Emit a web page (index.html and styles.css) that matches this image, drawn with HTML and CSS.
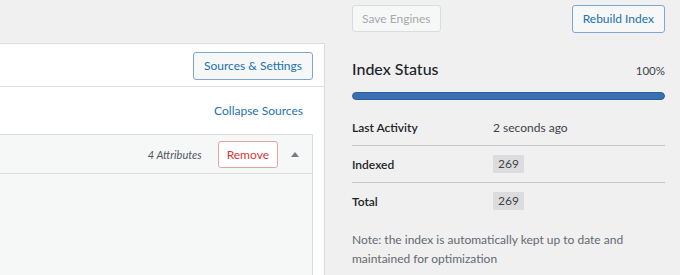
FILE: index.html
```html
<!DOCTYPE html>
<html>
<head>
<meta charset="utf-8">
<link rel="stylesheet" href="styles.css">
</head>
<body>
<div class="page">
  <div class="main">
    <div class="panel">
      <div class="panel-head">
        <button class="btn btn-secondary">Sources &amp; Settings</button>
      </div>
      <div class="panel-body">
        <div class="collapse-row"><a class="link" href="#">Collapse Sources</a></div>
        <div class="source">
          <div class="source-head">
            <span class="attrs">4 Attributes</span>
            <button class="btn btn-remove">Remove</button>
            <span class="toggle">
              <svg width="10" height="8" viewBox="0 0 10 8"><path d="M1 7 L5 2 L9 7 Z" fill="#787c82"/></svg>
            </span>
          </div>
          <div class="source-body"></div>
        </div>
      </div>
    </div>
  </div>
  <div class="side">
    <div class="actions">
      <button class="btn btn-disabled">Save Engines</button>
      <button class="btn btn-secondary">Rebuild Index</button>
    </div>
    <div class="status-head">
      <h2 class="status-title">Index Status</h2>
      <span class="percent">100%</span>
    </div>
    <div class="progress"><div class="progress-fill" style="width:100%"></div></div>
    <div class="stats">
      <div class="stat-row">
        <span class="stat-label">Last Activity</span>
        <span class="stat-value">2 seconds ago</span>
      </div>
      <div class="stat-row">
        <span class="stat-label">Indexed</span>
        <span class="stat-value"><code class="badge">269</code></span>
      </div>
      <div class="stat-row">
        <span class="stat-label">Total</span>
        <span class="stat-value"><code class="badge">269</code></span>
      </div>
    </div>
    <p class="note">Note: the index is automatically kept up to date and maintained for optimization</p>
  </div>
</div>
</body>
</html>
```

FILE: styles.css
```css
html, body {
  margin: 0;
  padding: 0;
  background: #f0f0f1;
  font-family: Lato, "Noto Sans", sans-serif;
  font-size: 12px;
  color: #1d2327;
  overflow: hidden;
}

.page {
  display: flex;
  align-items: flex-start;
  width: 680px;
  height: 275px;
}

.main {
  width: 325px;
  flex: none;
  padding-top: 43px;
}

.panel {
  background: #fff;
  border: 1px solid #dcdcde;
  border-left: none;
  border-bottom: none;
  height: 232px;
  box-sizing: border-box;
}

.panel-head {
  display: flex;
  justify-content: flex-end;
  padding: 8px 11px 6px 0;
  border-bottom: 1px solid #dcdcde;
}

.btn {
  font-family: inherit;
  font-size: 12px;
  line-height: 26px;
  height: 28px;
  padding: 0 10px;
  border-radius: 3px;
  background: #f6f7f7;
  border: 1px solid #dcdcde;
  box-sizing: border-box;
  cursor: pointer;
  white-space: nowrap;
}

.btn-secondary {
  color: #2271b1;
  border-color: #7fa6d1;
}

.btn-disabled {
  color: #a7aaad;
  border-color: #dcdcde;
  background: #f6f7f7;
  height: 27px;
  padding: 0 9px;
}

.btn-remove {
  color: #d63638;
  background: #fff;
  border-color: #e5a3a4;
  height: 27px;
  padding: 0 8px;
}

.panel-body {
  padding-right: 11px;
}

.collapse-row {
  display: flex;
  justify-content: flex-end;
  height: 47px;
  align-items: center;
  padding-right: 10px;
}

.link {
  color: #2271b1;
  text-decoration: none;
}

.source {
  border: 1px solid #dcdcde;
  border-left: none;
  background: #f6f7f7;
  height: 140px;
}

.source-head {
  display: flex;
  align-items: center;
  justify-content: flex-end;
  height: 38px;
  border-bottom: 1px solid #dcdcde;
  padding-right: 12px;
}

.attrs {
  font-style: italic;
  font-size: 11px;
  color: #50575e;
  margin-right: 16px;
}

.toggle {
  display: flex;
  margin-left: 12px;
  width: 10px;
}

.side {
  width: 313px;
  margin-left: 27px;
  flex: none;
}

.actions {
  display: flex;
  justify-content: space-between;
  padding-top: 5px;
}

.status-head {
  display: flex;
  justify-content: space-between;
  align-items: baseline;
  margin-top: 24px;
}

.status-title {
  margin: 0;
  font-size: 16px;
  font-weight: 500;
  line-height: 24px;
  color: #1d2327;
}

.percent {
  font-size: 11.5px;
  color: #3c434a;
}

.progress {
  margin-top: 11px;
  height: 8px;
  border-radius: 4px;
  background: #dcdcde;
  overflow: hidden;
}

.progress-fill {
  height: 100%;
  background: #3a6fb2;
  border: 1px solid #2a5c9e;
  border-radius: 4px;
  box-sizing: border-box;
}

.stats {
  margin-top: 9px;
}

.stat-row {
  display: flex;
  align-items: center;
  height: 36px;
  border-bottom: 1px solid #c3c4c7;
}

.stat-row:last-child {
  border-bottom: none;
}

.stat-label {
  width: 141px;
  font-weight: 600;
  color: #1d2327;
}

.stat-value {
  color: #3c434a;
}

.badge {
  display: inline-block;
  font-family: inherit;
  font-size: 12px;
  background: #dcdcde;
  padding: 0 5px;
  line-height: 18px;
  color: #3c434a;
}

.note {
  margin: 11px 0 0;
  color: #646970;
  line-height: 19px;
}
```
